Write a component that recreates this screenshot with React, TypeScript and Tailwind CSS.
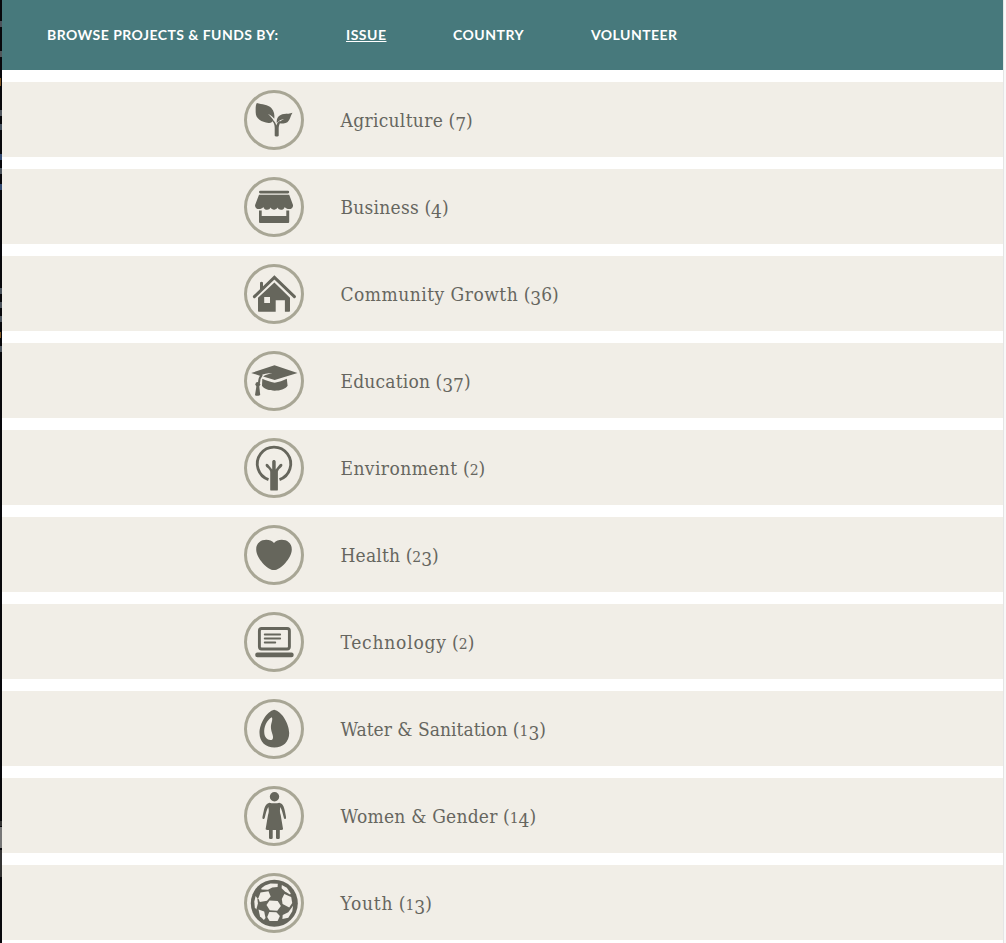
import type { ReactNode } from "react";

const ink = "#66665c";
const paper = "#f1eee7";

const icons: Record<string, ReactNode> = {
  agriculture: (
    <>
      <path d="M12.800 13C18 14.700 24 14.300 27.300 18c3 3.400 3.400 7 3 10.800-2.300-2.500-4-3.900-6.300-4.800 1.800 1.600 3.800 3.700 5.300 6-1.100 2.400-2.500 3.200-4.800 2.900-7-.7-12.800-4.100-12.800-10.400 0-3.700-.4-7.300 1.100-9.500Z" />
      <path d="M48.500 22.800c-2.600 3.400-2 10.400-9.200 10.800-2.200.1-3.200-.4-4.300-1.200 1.400-1.600 3.200-2.600 5.200-3.500-3.200.5-5.400 1.700-7.400 4-.7-4.800 2.300-8.400 7.200-8.900 3-.3 6-.1 8.500-1.200Z" />
      <path d="M28.800 29.800c2.100 2 3 3.600 3.500 5.600.7-1.900 1.700-3.300 3.200-4.300l1.300.9c-1.600 2-2.100 4.300-2.100 7v6.400c0 1.300-4 1.300-4 0v-7.300c0-3.300-.8-5.500-3-7.500Z" />
    </>
  ),
  business: (
    <>
      <rect x="15" y="13.700" width="30.200" height="2.700" rx="1.300" />
      <path d="M15 17.700h30.200l3.900 10.500c0 4.700-6.200 4.900-8.300 1.800-1.200 3.700-6.100 3.700-7.200.6-1.500 2.800-5.600 2.800-7.100 0-1.200 3.100-6 3.100-7.200-.6-2.200 3.100-8.300 2.900-8.300-1.800Z" />
      <path d="M15 33.500h2.700V39h24.600v-5.500h2.900v11.200c0 .8-.5 1.300-1.300 1.300H16.300c-.8 0-1.300-.5-1.300-1.300Z" />
    </>
  ),
  community: (
    <>
      <path d="M16 26v-7.500q1.500-1.600 3 0V24Z" />
      <path d="m10.400 32.600 20-19.300 20 19.300" fill="none" stroke={ink} strokeWidth="3" strokeLinecap="round" strokeLinejoin="miter" />
      <path fillRule="evenodd" d="M30.400 18.500 46 33.700v13c0 .7-.4 1.100-1.100 1.100h-4V36.300h-9.200v11.500H15.200c-.8 0-1.200-.4-1.200-1.100v-13ZM20.200 33v6H26v-6Z" />
    </>
  ),
  education: (
    <>
      <path d="m30.500 14.300 23 7.600-22.800 7-11.600-3.300c2.500-2 5.600-2.600 9.500-3.300-5.200 0-9.500.5-12.100 2.600L7.200 22Z" />
      <path d="M18.300 27.800c3.600 2 7.800 3 12.400 3.900 4.300-.8 8.400-1.900 12.100-3.900l.8 6.900c-4.700 6.600-21.200 6.600-25.600 0Z" />
      <path d="M18 23.800c-2.200 2.200-2.800 4.300-3 8.100" fill="none" stroke={ink} strokeWidth="2" />
      <circle cx="13.800" cy="33.300" r="2.400" />
      <path d="m12.500 34.500-1.500 9.400c.8 1.200 4.200 1.300 5.200.2l-1-9.600Z" />
    </>
  ),
  environment: (
    <>
      <path d="M24.500 41.600A16.700 16.700 0 1 1 35.500 41.600" fill="none" stroke={ink} strokeWidth="2.800" />
      <path d="M26.200 51.400V33.600c-.5-2-1.700-3-3.200-4.100-1.100-1-1.600-2-1.300-3 .6-.9 1.600-.8 2.500 0l4 4.900v-7.600c0-2.300 3.500-2.300 3.500 0v7.600l3.900-4.900c1-1 2.100-1 2.700-.1.400 1.100-.2 2.100-1.300 3.100-1.600 1.200-2.600 2.400-3.100 4.100v17.800c0 .8-.5 1.200-1.300 1.200h-5.100c-.8 0-1.300-.4-1.300-1.200Z" />
    </>
  ),
  health: (
    <path d="M30 18c5.200-5.800 18-3.700 17.800 6.400-.1 8.900-11.600 20.700-17.800 20.700S12.300 33.300 12.200 24.400C12 14.300 24.800 12.200 30 18Z" />
  ),
  technology: (
    <>
      <rect x="15.400" y="16.500" width="30" height="20.500" rx="2.200" fill="none" stroke={ink} strokeWidth="2.900" />
      <path d="M20.700 22.500h15.500M20.700 26.500h15.500M20.700 30.500h10.600" stroke={ink} strokeWidth="1.800" strokeLinecap="round" />
      <rect x="11.200" y="40.600" width="38.500" height="4.600" rx="2.200" />
    </>
  ),
  water: (
    <>
      <path d="M30.200 10.800c7.600 1.600 15 13.900 15 23.200 0 9-6.300 14.600-14.800 14.600S15.500 43 15.500 34c0-9.300 7.200-21.600 14.700-23.200Z" />
      <path d="M27.700 18.300c-5.100 3.200-8 9.400-7.400 16 .5 4.300 3.400 7.500 7.300 6.600 1.700-.4 1.700-2.800 1-5.100-1.500-4.900-2.400-7.600-.9-12.500.6-2.200.9-4.100 0-5Z" fill={paper} />
    </>
  ),
  women: (
    <>
      <circle cx="30.500" cy="10.800" r="4.700" />
      <path d="M25.500 16.700c2 .8 7.600.8 9.800 0 3.500.7 4.600 4 5.400 7.600l1.200 6c.3 1.600.1 2.500-.6 2.700-.8.200-1.300-.5-1.600-1.800-.9-3.900-1.900-7.600-3.400-10.300-.5 3.100-.6 5 .4 8.100l2.400 14.300c-1.200.8-2 .8-3.300.8v7.800c0 1.500-3.800 1.500-3.800 0v-7.800h-3.300v7.800c0 1.500-3.700 1.500-3.700 0v-7.800c-1.200 0-2.300-.1-3.400-.8L24 29c1-3.100 1-5 .3-8.100-1.600 2.700-2.600 6.400-3.400 10.300-.3 1.300-.8 2-1.700 1.800-.7-.2-1-1.100-.6-2.700l1.300-6c.8-3.600 2.200-6.900 5.600-7.600Z" />
    </>
  ),
  youth: (
    <>
      <circle cx="30.300" cy="30.200" r="23.500" />
      <g fill={paper}>
        <path d="m17.300 15.300 3.700-2.700 5.500-2 7.300.2-.2 3.200-5.300.5-4.300 2.200-6.500-.2Z" />
        <path d="m16.500 19.500 8-1.300 2.200 5.200-3.700 4.400-7.200 1.100-1.500-3.700Z" />
        <path d="m37.800 12.100 5 2.700 4 5.700-.8.900-5-2.800-3.400-3.400Z" />
        <path d="m40.300 21.100 6.900 2.900 1 5.900-3 4.500-6.600-3.500-.8-4.900Z" />
        <path d="m25.500 27.400 8.200.5 3.200 5.200-3.600 4.600-7.500-.4-3.300-5.200Z" />
        <path d="m11.600 23 1.700 2.200.6 5.300-1.600 5.900-1.500-2.200-.5-5.500Z" />
        <path d="m14.500 36.400 5.700 2 1.300 6.500-1.600 2-3.900-3.700Z" />
        <path d="m25.300 39 7.100.3 3.500 3.800-2.300 4.800-8 .1-2.400-4Z" />
        <path d="m38.700 42 5.600-2.700 4.800-6.500-.8 5.500-4 6.500-5.900 1.200Z" />
      </g>
    </>
  ),
};

const issues = [
  { icon: "agriculture", name: "Agriculture", count: 7, tracking: "tracking-[0.310px]" },
  { icon: "business", name: "Business", count: 4, tracking: "tracking-[0.250px]" },
  { icon: "community", name: "Community Growth", count: 36, tracking: "tracking-[0.490px]" },
  { icon: "education", name: "Education", count: 37, tracking: "tracking-[0.200px]" },
  { icon: "environment", name: "Environment", count: 2, tracking: "tracking-[0.440px]" },
  { icon: "health", name: "Health", count: 23, tracking: "tracking-[0.200px]" },
  { icon: "technology", name: "Technology", count: 2, tracking: "tracking-[0.790px]" },
  { icon: "water", name: "Water & Sanitation", count: 13, tracking: "tracking-[0.030px]" },
  { icon: "women", name: "Women & Gender", count: 14, tracking: "tracking-[0.220px]" },
  { icon: "youth", name: "Youth", count: 13, tracking: "tracking-[0.800px]" },
];

// Old-style figures: 0-2 sit at x-height, 3-5, 7 and 9 drop below the baseline.
function digitClass(d: string) {
  if ("012".includes(d)) return "text-[15.500px] leading-none";
  if ("34579".includes(d)) return "align-[-4px] leading-none";
  return "leading-none";
}

function IssueRow({ icon, name, count, tracking }: (typeof issues)[number]) {
  return (
    <li className="flex h-[75px] shrink-0 items-center bg-[#f1eee7] pl-[242px]">
      <svg viewBox="0 0 60 60" className="mt-px size-[60px] shrink-0" fill={ink} aria-hidden="true">
        <circle cx="30" cy="30" r="28.500" fill="none" stroke="#a8a695" strokeWidth="3" />
        {icons[icon]}
      </svg>
      <a className="ml-[36.500px] h-[34px] whitespace-nowrap pt-0.5 font-['DejaVu_Serif_Condensed','DejaVu_Serif',serif] text-[19px] leading-[30px] text-[#66665f] [font-stretch:condensed]">
        <span className={tracking}>{name}</span>
        <span>
          {" ("}
          {String(count).split("").map((d, i) => (
            <span key={i} className={digitClass(d)}>{d}</span>
          ))}
          )
        </span>
      </a>
    </li>
  );
}

export default function App() {
  return (
    <div className="flex h-[943px] w-[1006px] overflow-hidden bg-white">
      <div className="flex w-0.5 shrink-0 flex-col bg-[#08080c]">
        <div className="mt-[21px] h-1.5 bg-[#4e535c]" />
        <div className="mt-6 h-1.5 bg-[#53585c]" />
        <div className="mt-[21px] h-2 w-px bg-[#805622]" />
        <div className="mt-6 h-1.5 bg-[#525860]" />
        <div className="mt-2 h-1.5 bg-[#46515e]" />
        <div className="mt-6 h-1.5 bg-[#344b72]" />
        <div className="mt-2 h-1.5 bg-[#4b535c]" />
        <div className="mt-2.5 h-1.5 bg-[#344b72]" />
        <div className="mt-[98px] h-1.5 bg-[#4b535c]" />
        <div className="mt-2 h-1.5 bg-[#4b535c]" />
        <div className="mt-2 h-1.5 bg-[#4b535c]" />
        <div className="mt-2.5 h-1.5 w-px bg-[#805622]" />
        <div className="mt-2 h-1.5 bg-[#4b535c]" />
        <div className="mt-[469px] h-[5px] bg-[#333333]" />
        <div className="mt-px h-[21px] bg-[#777777]" />
        <div className="mt-0.5 h-[27px] bg-[#333333]" />
      </div>
      <main className="flex w-[1001px] shrink-0 flex-col">
        <nav className="flex h-[70px] shrink-0 items-center bg-[#47797c] pb-0.5 pl-[45px] font-['Lato',sans-serif] text-[14px] font-bold tracking-[0.500px] text-white">
          <span className="w-[299px] tracking-[0.460px]">BROWSE PROJECTS &amp; FUNDS BY:</span>
          <a className="w-[107px] underline">ISSUE</a>
          <a className="w-[138px]">COUNTRY</a>
          <a className="tracking-[0.450px]">VOLUNTEER</a>
        </nav>
        <ul className="mt-3 flex flex-col gap-3">
          {issues.map((issue) => <IssueRow key={issue.name} {...issue} />)}
        </ul>
      </main>
      <div className="w-[3px] shrink-0 border-l border-[#e5e5e5] bg-[#f8f8f8]" />
    </div>
  );
}
